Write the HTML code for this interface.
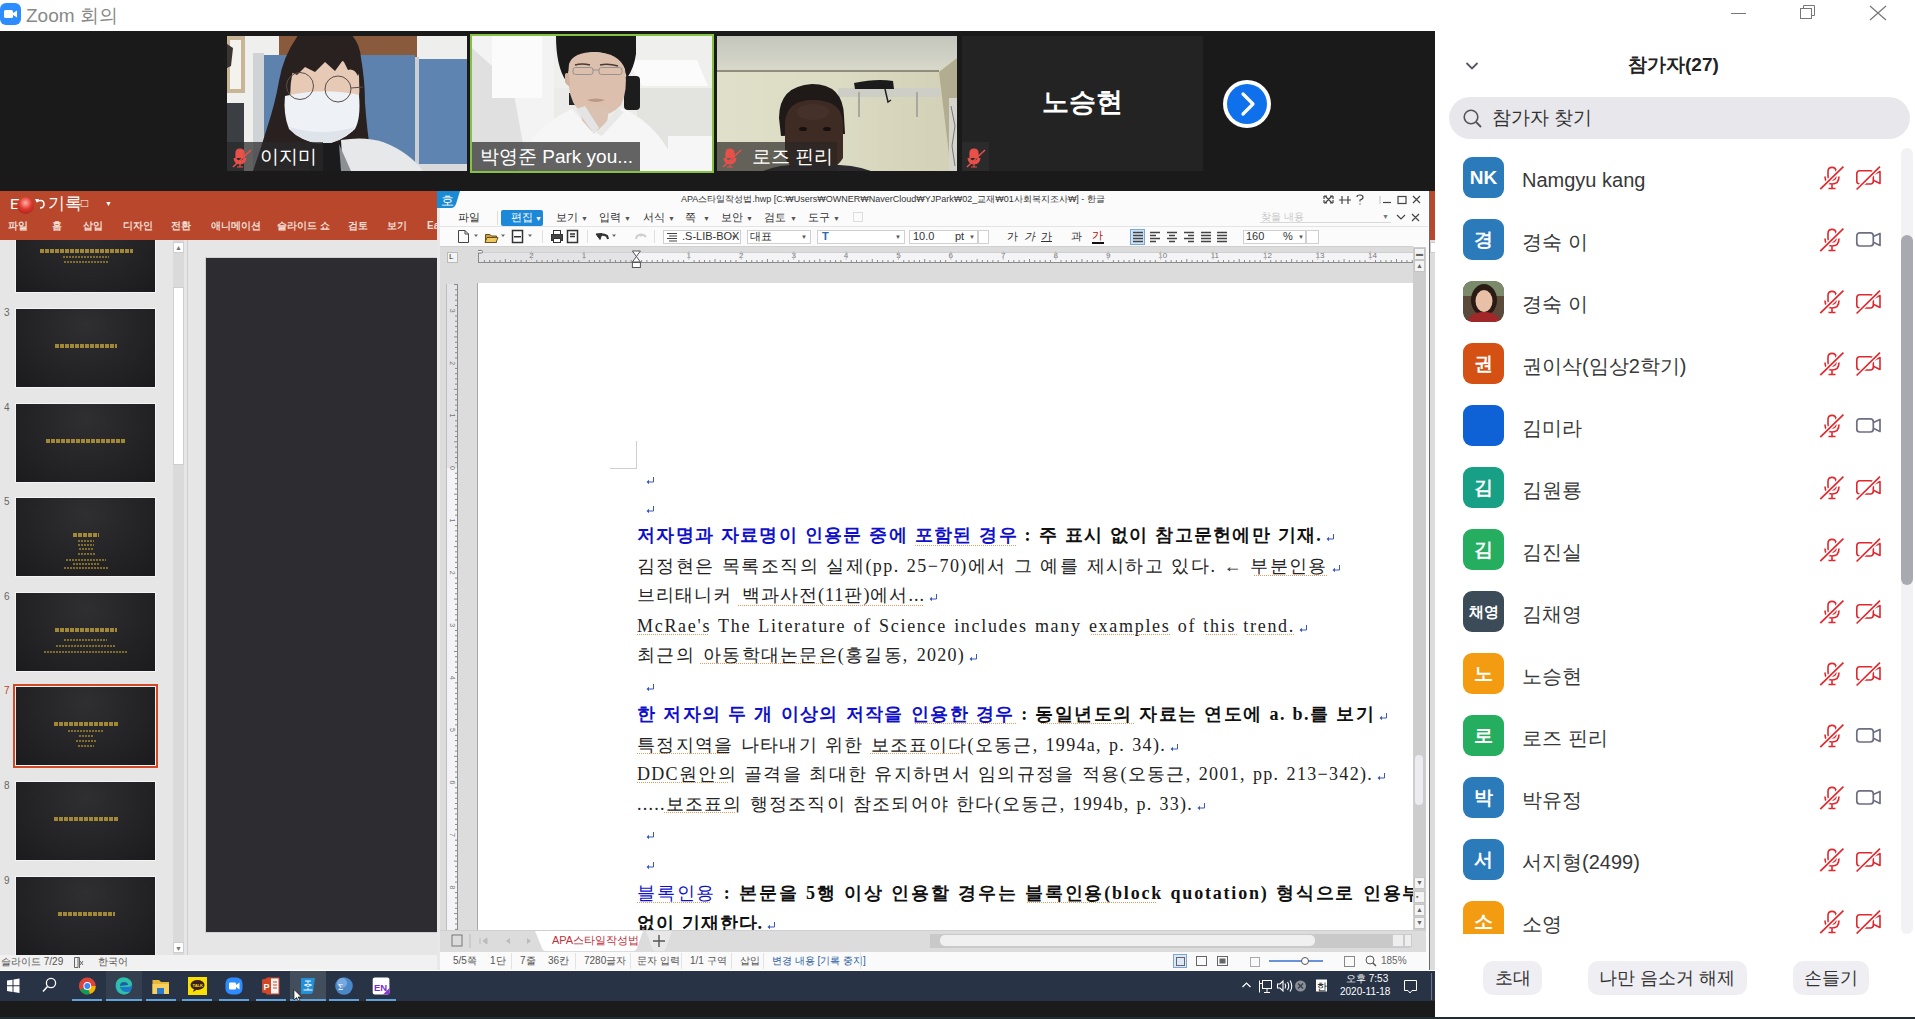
<!DOCTYPE html>
<html><head><meta charset="utf-8">
<style>
*{margin:0;padding:0;box-sizing:border-box}
html,body{width:1915px;height:1019px;overflow:hidden;background:#fff;font-family:"Liberation Sans",sans-serif;position:relative}
.a{position:absolute}
.t{position:absolute;white-space:nowrap;line-height:1}
/* title bar */
#title{left:0;top:0;width:1915px;height:31px;background:#fff}
/* video strip */
#strip{left:0;top:31px;width:1435px;height:160px;background:#1a1a1a}
.tile{position:absolute;overflow:hidden}
.lbl{position:absolute;left:0;bottom:0;height:29px;background:rgba(40,40,40,.72);color:#fff;font-size:19px;line-height:29px;white-space:nowrap}
/* ppt */
#ppt{left:0;top:191px;width:1435px;height:779px;background:#e6e6e6;overflow:hidden}
.thumb{position:absolute;left:16px;width:139px;height:78px;background:radial-gradient(ellipse at 50% 20%,#2f2f32 0,#242427 55%,#1b1b1d 100%);box-shadow:0 0 0 1px #f4f4f4}
.tn{position:absolute;left:4px;font-size:10px;color:#666}
.tt{position:absolute;left:0;width:139px;text-align:center;color:#d4a83a;font-size:6px;font-weight:bold;white-space:nowrap}
/* hwp */
#hwp{left:437px;top:191px;width:992px;height:779px;background:#f5f5f5;overflow:hidden;border-left:1px solid #aaa}
.doc{position:absolute;font-family:"Liberation Serif",serif;font-size:18px;color:#222;white-space:nowrap;line-height:20px;text-align:justify;text-align-last:justify}
.k{font-family:"Liberation Sans",sans-serif}
.rt{position:absolute;left:0;top:0}
.bl2{color:#1010c8}
.b{font-weight:bold;color:#111}
.bl{color:#1010c8;font-weight:bold}
.ret{color:#3355aa;font-size:10px}
/* taskbar */
#task{left:0;top:971px;width:1435px;height:30px;background:#283346}
#blk{left:0;top:1001px;width:1435px;height:16px;background:#1b1b1b}
#bot{left:0;top:1017px;width:1915px;height:2px;background:#1f2c30}
/* panel */
#panel{left:1435px;top:31px;width:480px;height:985px;background:#fff}
.row{position:absolute;left:28px;width:440px;height:41px}
.av{position:absolute;left:0;top:0;width:41px;height:41px;border-radius:9px;color:#fff;font-weight:bold;font-size:17px;text-align:center;line-height:41px}
.nm{position:absolute;left:59px;top:12px;font-size:20px;color:#383838;white-space:nowrap;line-height:22px}
.ic{position:absolute;top:8px}
.btn{position:absolute;top:930px;height:34px;background:#efeff3;border-radius:10px;font-size:18px;color:#333;text-align:center;line-height:34px}
</style></head><body>

<!-- TITLE BAR -->
<div id="title" class="a">
  <svg class="a" style="left:0;top:3px" width="21" height="22" viewBox="0 0 21 22"><rect x="0" y="0" width="21" height="22" rx="6" fill="#2d8cff"/><rect x="4" y="7" width="9" height="8" rx="1.5" fill="#fff"/><path d="M13 10 L17 7.5 V14.5 L13 12Z" fill="#fff"/></svg>
  <div class="t" style="left:26px;top:6px;font-size:19px;color:#888">Zoom 회의</div>
  <svg class="a" style="left:1725px;top:0" width="190" height="31"><line x1="6" y1="13.5" x2="21" y2="13.5" stroke="#777" stroke-width="1"/><rect x="75.5" y="8.5" width="11" height="10" fill="none" stroke="#777"/><path d="M78.5 8.5 V5.5 H89.5 V15.5 H86.5" fill="none" stroke="#777"/><path d="M145 6 L161 20 M161 6 L145 20" stroke="#777" stroke-width="1.2"/></svg>
</div>

<!-- VIDEO STRIP -->
<div id="strip" class="a"></div>
<!-- tile 1 -->
<div class="tile" style="left:227px;top:36px;width:240px;height:135px">
<svg width="240" height="135" viewBox="0 0 240 135">
<rect width="240" height="135" fill="#efefed"/>
<rect x="0" y="0" width="18" height="57" fill="#c8b596"/><rect x="3" y="4" width="11" height="49" fill="#f4f2ec"/>
<path d="M0 8 L6 12 L4 30 L0 32Z" fill="#3a3432"/>
<rect x="0" y="67" width="17" height="68" fill="#3b3e42"/>
<rect x="52" y="0" width="138" height="21" fill="#8a5a3c"/>
<rect x="190" y="0" width="50" height="23" fill="#eeeeec"/>
<rect x="26" y="17" width="11" height="118" fill="#d0d3d6"/>
<rect x="37" y="19" width="151" height="110" fill="#5d82ae"/>
<rect x="188" y="21" width="4" height="112" fill="#cbced2"/>
<rect x="192" y="23" width="48" height="106" fill="#5e85b2"/>
<rect x="37" y="128" width="203" height="7" fill="#d8d9db"/>
<path d="M72 -2 L124 -2 Q133 8 134 22 Q138 45 138 67 Q140 95 144 120 L148 135 L26 135 Q34 112 40 92 Q48 68 52 45 Q56 20 72 -2Z" fill="#292120"/>
<path d="M66 34 Q70 24 98 22 Q128 24 132 40 Q134 70 126 95 Q112 106 96 106 Q76 104 66 92 Q60 60 66 34Z" fill="#e7cab5"/>
<path d="M64 36 Q68 4 98 2 Q126 2 132 30 L131 40 Q127 32 121 34 L116 24 L108 35 L98 26 L88 36 L78 31 L70 39Z" fill="#292120"/>
<path d="M58 60 Q96 51 132 59 Q134 82 128 93 Q112 108 95 108 Q74 106 62 93 Q56 78 58 60Z" fill="#eef1f6"/>
<path d="M62 91 Q95 101 128 91 Q112 108 95 108 Q74 106 62 91Z" fill="#dfe3ea"/>
<circle cx="73" cy="50" r="13.5" fill="none" stroke="#5b4d4a" stroke-width="1"/><circle cx="111" cy="53" r="13" fill="none" stroke="#5b4d4a" stroke-width="1"/><path d="M124 52 L136 51" stroke="#5b4d4a" stroke-width="1"/>
<path d="M84 108 L96 107 L114 107 L118 135 L82 135Z" fill="#1b1b1d"/>
<path d="M114 104 Q138 100 156 106 Q182 116 196 135 L116 135Z" fill="#e7e8ea"/>
<path d="M112 108 L124 135 L114 135Z" fill="#8d9092"/>
</svg>
<div class="lbl" style="width:96px"><svg class="a" style="left:5px;top:6px" width="22" height="20" viewBox="0 0 22 20"><path d="M8 1 Q12 1 12 5 V10 Q12 13 8 13 Q4 13 4 10 V5 Q4 1 8 1Z M2 10 Q3 16 8 16 Q13 16 14 10 M8 16 V19 M5 19 H11" fill="#e8504a" stroke="#e8504a" stroke-width="1.2"/><line x1="1" y1="19" x2="19" y2="2" stroke="#e8504a" stroke-width="1.6"/></svg><span class="a" style="left:33px;top:0">이지미</span></div>
</div>
<!-- tile 2 -->
<div class="a" style="left:470px;top:34px;width:244px;height:139px;background:#84c341"></div>
<div class="tile" style="left:472px;top:36px;width:240px;height:135px">
<svg width="240" height="135" viewBox="0 0 240 135">
<rect width="240" height="135" fill="#ebebe9"/>
<rect x="0" y="0" width="82" height="135" fill="#f3f3f3"/>
<path d="M0 12 L40 48 L56 135 L0 135Z" fill="#e0e0e0"/>
<rect x="20" y="0" width="50" height="62" fill="#fbfbfb"/>
<rect x="82" y="0" width="158" height="52" fill="#efefed"/>
<path d="M155 24 L225 24 L236 50 L170 50Z" fill="#fbfbfb"/>
<rect x="165" y="52" width="75" height="83" fill="#e3e3df"/>
<rect x="196" y="100" width="44" height="35" fill="#f6f6f6"/>
<rect x="152" y="40" width="16" height="34" rx="4" fill="#1d1d1d"/>
<rect x="97" y="57" width="7" height="12" fill="#262626"/>
<path d="M84 0 H164 V18 Q162 32 155 42 L151 30 Q141 17 123 16 Q104 17 98 31 L94 45 Q84 30 84 0Z" fill="#1a1a1a"/>
<path d="M97 28 Q101 16 123 16 Q147 17 153 33 Q156 55 149 69 Q139 80 124 80 Q107 78 101 66 Q94 50 97 28Z" fill="#dcc0ad"/>
<path d="M93 38 Q95 36 97 38 L98 50 Q95 50 93 46Z" fill="#d0b29e"/>
<path d="M103 29 Q110 27 118 29 M128 29 Q136 27 146 30" stroke="#4a3a32" stroke-width="1.6" fill="none"/>
<rect x="101" y="31.5" width="20" height="7" rx="2.5" fill="none" stroke="#8c8c8c" stroke-width=".9"/>
<rect x="127" y="31.5" width="23" height="7" rx="2.5" fill="none" stroke="#8c8c8c" stroke-width=".9"/>
<path d="M121 34 H127" stroke="#8c8c8c" stroke-width=".9"/>
<path d="M115 64 Q124 61 133 64 Q124 68 115 64Z" fill="#b89888"/>
<path d="M108 72 L137 72 L134 95 L112 95Z" fill="#d9c2b2"/>
<path d="M46 135 Q52 95 100 73 L122 98 L150 72 Q190 90 206 135Z" fill="#f6f6f6"/>
<path d="M104 73 L122 98 L127 92 L113 70Z" fill="#e4e4e4"/><path d="M146 73 L124 97 L130 100 L152 76Z" fill="#e8e8e8"/>
</svg>
<div class="lbl" style="width:168px;background:rgba(62,62,62,.8)"><span class="a" style="left:8px;top:0">박영준 Park you...</span></div>
</div>
<!-- tile 3 -->
<div class="tile" style="left:717px;top:36px;width:240px;height:135px">
<svg width="240" height="135" viewBox="0 0 240 135">
<defs><linearGradient id="ceil" x1="0" y1="0" x2="0" y2="1"><stop offset="0" stop-color="#c4c6bd"/><stop offset="1" stop-color="#d8d8ca"/></linearGradient>
<linearGradient id="wall3" x1="0" y1="0" x2="1" y2="0"><stop offset="0" stop-color="#e0dfc9"/><stop offset=".5" stop-color="#dcdbc3"/><stop offset="1" stop-color="#d2d0b6"/></linearGradient></defs>
<rect width="240" height="135" fill="url(#wall3)"/>
<rect x="0" y="0" width="240" height="35" fill="url(#ceil)"/>
<rect x="0" y="34" width="222" height="2" fill="#8f8d7c"/>
<path d="M222 36 L240 22 L240 135 L234 135Z" fill="#b2ad90"/>
<rect x="232" y="62" width="8" height="73" fill="#d4d4cc"/><path d="M234 70 L238 90 L235 110 L238 130" stroke="#777" stroke-width="1" fill="none"/>
<rect x="121" y="52" width="102" height="9" fill="#cdcec6"/>
<path d="M137 47 Q160 42 176 45 L177 53 L138 53Z" fill="#1b1b1b"/><path d="M168 53 L171 66 L174 64" stroke="#222" stroke-width="1.5" fill="none"/>
<rect x="141" y="56" width="2" height="25" fill="#a8a89c"/><rect x="199" y="56" width="2" height="25" fill="#a8a89c"/>
<path d="M62 82 Q62 50 95 48 Q126 48 127 80 L128 98 L64 100Z" fill="#1f1918"/>
<path d="M68 86 Q70 64 96 64 Q124 64 126 86 L126 122 Q118 136 96 138 Q74 136 68 122Z" fill="#3d2b24"/>
<ellipse cx="96" cy="76" rx="16" ry="8" fill="#4b362d" opacity=".6"/>
<ellipse cx="86" cy="93" rx="4" ry="2" fill="#15100e"/><ellipse cx="110" cy="93" rx="4" ry="2" fill="#15100e"/>
<path d="M46 135 Q66 127 96 129 Q132 127 154 135Z" fill="#2c2a2f"/>
</svg>
<div class="lbl" style="width:120px;background:rgba(40,38,36,.68)"><svg class="a" style="left:5px;top:6px" width="22" height="20" viewBox="0 0 22 20"><path d="M8 1 Q12 1 12 5 V10 Q12 13 8 13 Q4 13 4 10 V5 Q4 1 8 1Z M2 10 Q3 16 8 16 Q13 16 14 10 M8 16 V19 M5 19 H11" fill="#e8504a" stroke="#e8504a" stroke-width="1.2"/><line x1="1" y1="19" x2="19" y2="2" stroke="#e8504a" stroke-width="1.6"/></svg><span class="a" style="left:35px;top:0">로즈 핀리</span></div>
</div>
<!-- tile 4 -->
<div class="tile" style="left:962px;top:36px;width:241px;height:135px;background:#232323">
<div class="t" style="left:0;width:241px;text-align:center;top:53px;font-size:27px;font-weight:bold;color:#fff">노승현</div>
<div class="lbl" style="width:27px;background:#2b2b2b"><svg class="a" style="left:4px;top:6px" width="22" height="20" viewBox="0 0 22 20"><path d="M8 1 Q12 1 12 5 V10 Q12 13 8 13 Q4 13 4 10 V5 Q4 1 8 1Z M2 10 Q3 16 8 16 Q13 16 14 10 M8 16 V19 M5 19 H11" fill="#e8504a" stroke="#e8504a" stroke-width="1.2"/><line x1="1" y1="19" x2="19" y2="2" stroke="#e8504a" stroke-width="1.6"/></svg></div>
</div>
<svg class="a" style="left:1222px;top:79px" width="50" height="50" viewBox="0 0 50 50"><circle cx="25" cy="25" r="24" fill="#fff"/><circle cx="25" cy="25" r="20" fill="#0e71eb"/><path d="M21 15 L31 25 L21 35" fill="none" stroke="#fff" stroke-width="3.2" stroke-linecap="round" stroke-linejoin="round"/></svg>


<!-- PPT + HWP -->
<div id="ppt" class="a"></div>
<div class="a" style="left:0;top:191px;width:1435px;height:49px;background:#b8472b"></div>
<div class="t" style="left:10px;top:196px;font-size:15px;color:#fff">E</div>
<div class="a" style="left:17px;top:197px;width:17px;height:17px;border-radius:50%;background:radial-gradient(circle at 50% 35%,#ffb0a8 0,#e0372c 45%,#8a1d18 100%)"></div>
<svg class="a" style="left:34px;top:198px" width="12" height="12" viewBox="0 0 12 12"><path d="M3 3 Q10 1 10 6 Q10 10 6 10" fill="none" stroke="#fff" stroke-width="1.5"/><path d="M1 1 L5 1 L3 5Z" fill="#fff"/></svg>
<div class="t" style="left:48px;top:195px;font-size:17px;color:#fff">기록</div>
<div class="t" style="left:81px;top:197px;font-size:12px;color:#fff">□</div>
<div class="t" style="left:105px;top:200px;font-size:7px;color:#fff">▼</div>
<div class="t" style="left:8px;top:221px;font-size:10px;font-weight:bold;color:#f3ddd4">파일</div>
<div class="t" style="left:52px;top:221px;font-size:10px;font-weight:bold;color:#f3ddd4">홈</div>
<div class="t" style="left:83px;top:221px;font-size:10px;font-weight:bold;color:#f3ddd4">삽입</div>
<div class="t" style="left:123px;top:221px;font-size:10px;font-weight:bold;color:#f3ddd4">디자인</div>
<div class="t" style="left:171px;top:221px;font-size:10px;font-weight:bold;color:#f3ddd4">전환</div>
<div class="t" style="left:211px;top:221px;font-size:10px;font-weight:bold;color:#f3ddd4">애니메이션</div>
<div class="t" style="left:277px;top:221px;font-size:10px;font-weight:bold;color:#f3ddd4">슬라이드 쇼</div>
<div class="t" style="left:348px;top:221px;font-size:10px;font-weight:bold;color:#f3ddd4">검토</div>
<div class="t" style="left:387px;top:221px;font-size:10px;font-weight:bold;color:#f3ddd4">보기</div>
<div class="t" style="left:427px;top:221px;font-size:10px;font-weight:bold;color:#f3ddd4">Ea</div>
<div class="a" style="left:0;top:240px;width:437px;height:715px;background:#e6e6e6;overflow:hidden">
<div class="thumb" style="top:-26px"><div class="a" style="left:24px;top:35px;width:93px;height:4px;background:repeating-linear-gradient(90deg,#c9a83a 0 4px,rgba(0,0,0,0) 4px 5px);opacity:.75"></div><div class="a" style="left:47px;top:42px;width:46px;height:2px;background:repeating-linear-gradient(90deg,#a88d30 0 2px,rgba(0,0,0,0) 2px 3px);opacity:.7"></div><div class="a" style="left:48px;top:47px;width:44px;height:2px;background:repeating-linear-gradient(90deg,#a88d30 0 2px,rgba(0,0,0,0) 2px 3px);opacity:.7"></div></div>
<div class="thumb" style="top:69px"><div class="a" style="left:39px;top:35px;width:62px;height:4px;background:repeating-linear-gradient(90deg,#c9a83a 0 4px,rgba(0,0,0,0) 4px 5px);opacity:.75"></div></div>
<div class="tn" style="top:67px;color:#666">3</div>
<div class="thumb" style="top:164px"><div class="a" style="left:30px;top:35px;width:79px;height:4px;background:repeating-linear-gradient(90deg,#c9a83a 0 4px,rgba(0,0,0,0) 4px 5px);opacity:.75"></div></div>
<div class="tn" style="top:162px;color:#666">4</div>
<div class="thumb" style="top:258px"><div class="a" style="left:57px;top:35px;width:26px;height:4px;background:repeating-linear-gradient(90deg,#c9a83a 0 4px,rgba(0,0,0,0) 4px 5px);opacity:.75"></div><div class="a" style="left:62px;top:42px;width:16px;height:2px;background:repeating-linear-gradient(90deg,#a88d30 0 2px,rgba(0,0,0,0) 2px 3px);opacity:.7"></div><div class="a" style="left:62px;top:46px;width:16px;height:2px;background:repeating-linear-gradient(90deg,#a88d30 0 2px,rgba(0,0,0,0) 2px 3px);opacity:.7"></div><div class="a" style="left:63px;top:50px;width:14px;height:2px;background:repeating-linear-gradient(90deg,#a88d30 0 2px,rgba(0,0,0,0) 2px 3px);opacity:.7"></div><div class="a" style="left:62px;top:55px;width:18px;height:2px;background:repeating-linear-gradient(90deg,#a88d30 0 2px,rgba(0,0,0,0) 2px 3px);opacity:.7"></div><div class="a" style="left:50px;top:61px;width:40px;height:2px;background:repeating-linear-gradient(90deg,#a88d30 0 2px,rgba(0,0,0,0) 2px 3px);opacity:.7"></div><div class="a" style="left:57px;top:65px;width:27px;height:2px;background:repeating-linear-gradient(90deg,#a88d30 0 2px,rgba(0,0,0,0) 2px 3px);opacity:.7"></div><div class="a" style="left:48px;top:69px;width:44px;height:2px;background:repeating-linear-gradient(90deg,#a88d30 0 2px,rgba(0,0,0,0) 2px 3px);opacity:.7"></div></div>
<div class="tn" style="top:256px;color:#666">5</div>
<div class="thumb" style="top:353px"><div class="a" style="left:39px;top:35px;width:62px;height:4px;background:repeating-linear-gradient(90deg,#c9a83a 0 4px,rgba(0,0,0,0) 4px 5px);opacity:.75"></div><div class="a" style="left:48px;top:46px;width:43px;height:2px;background:repeating-linear-gradient(90deg,#a88d30 0 2px,rgba(0,0,0,0) 2px 3px);opacity:.7"></div><div class="a" style="left:40px;top:52px;width:60px;height:2px;background:repeating-linear-gradient(90deg,#a88d30 0 2px,rgba(0,0,0,0) 2px 3px);opacity:.7"></div><div class="a" style="left:28px;top:58px;width:83px;height:2px;background:repeating-linear-gradient(90deg,#a88d30 0 2px,rgba(0,0,0,0) 2px 3px);opacity:.7"></div></div>
<div class="tn" style="top:351px;color:#666">6</div>
<div class="a" style="left:13px;top:444px;width:145px;height:84px;background:#d24726"></div>
<div class="thumb" style="top:447px"><div class="a" style="left:38px;top:35px;width:64px;height:4px;background:repeating-linear-gradient(90deg,#c9a83a 0 4px,rgba(0,0,0,0) 4px 5px);opacity:.75"></div><div class="a" style="left:52px;top:43px;width:36px;height:2px;background:repeating-linear-gradient(90deg,#a88d30 0 2px,rgba(0,0,0,0) 2px 3px);opacity:.7"></div><div class="a" style="left:63px;top:48px;width:14px;height:2px;background:repeating-linear-gradient(90deg,#a88d30 0 2px,rgba(0,0,0,0) 2px 3px);opacity:.7"></div><div class="a" style="left:60px;top:53px;width:20px;height:2px;background:repeating-linear-gradient(90deg,#a88d30 0 2px,rgba(0,0,0,0) 2px 3px);opacity:.7"></div><div class="a" style="left:62px;top:58px;width:16px;height:2px;background:repeating-linear-gradient(90deg,#a88d30 0 2px,rgba(0,0,0,0) 2px 3px);opacity:.7"></div></div>
<div class="tn" style="top:445px;color:#c43e1c">7</div>
<div class="thumb" style="top:542px"><div class="a" style="left:38px;top:35px;width:64px;height:4px;background:repeating-linear-gradient(90deg,#c9a83a 0 4px,rgba(0,0,0,0) 4px 5px);opacity:.75"></div></div>
<div class="tn" style="top:540px;color:#666">8</div>
<div class="thumb" style="top:637px"><div class="a" style="left:42px;top:35px;width:57px;height:4px;background:repeating-linear-gradient(90deg,#c9a83a 0 4px,rgba(0,0,0,0) 4px 5px);opacity:.75"></div></div>
<div class="tn" style="top:635px;color:#666">9</div>
<div class="a" style="left:173px;top:0;width:11px;height:715px;background:#dadada"></div>
<div class="a" style="left:173px;top:2px;width:11px;height:11px;background:#fff;border:1px solid #cfcfcf"></div>
<div class="t" style="left:175px;top:4px;font-size:7px;color:#777">▲</div>
<div class="a" style="left:173px;top:47px;width:11px;height:178px;background:#fff;border:1px solid #cfcfcf"></div>
<div class="a" style="left:173px;top:702px;width:11px;height:11px;background:#fff;border:1px solid #cfcfcf"></div>
<div class="t" style="left:175px;top:705px;font-size:7px;color:#777">▼</div>
<div class="a" style="left:187px;top:0;width:1px;height:715px;background:#cfcfcf"></div>
<div class="a" style="left:206px;top:18px;width:231px;height:674px;background:#2d2d31;box-shadow:0 0 0 1px #d0d0d0"></div>
</div>
<div class="a" style="left:0;top:955px;width:437px;height:15px;background:#f1f1f1"></div>
<div class="t" style="left:1px;top:957px;font-size:10px;color:#555">슬라이드 7/29</div>
<svg class="a" style="left:73px;top:956px" width="12" height="13" viewBox="0 0 12 13"><path d="M1.5 1.5 H5 V11.5 H1.5Z M5 1.5 H6.5 V12 M7 5 L10 9 M10 5 L7 9" fill="none" stroke="#666" stroke-width="1"/></svg>
<div class="t" style="left:98px;top:957px;font-size:10px;color:#555">한국어</div>
<div id="hwp" class="a"></div>
<div class="a" style="left:437px;top:191px;width:993px;height:779px;background:#fbfbfb;border-left:3px solid #e8e8e8;border-right:1px solid #6a6a6a"></div>
<div class="a" style="left:1430px;top:240px;width:5px;height:730px;background:#dcdcdc"></div><div class="a" style="left:1430px;top:242px;width:5px;height:11px;background:#fff;border:1px solid #ccc;border-right:none"></div>
<svg class="a" style="left:437px;top:191px" width="24" height="18" viewBox="0 0 24 18"><path d="M0 0 H23 L19 13 Q17.5 17 14 17 H0Z" fill="#1a8ad4"/><text x="4" y="14" font-size="13" fill="#fff" font-family="Liberation Sans">호</text></svg>
<div class="t" style="left:681px;top:195px;font-size:9px;color:#333">APA스타일작성법.hwp [C:₩Users₩OWNER₩NaverCloud₩YJPark₩02_교재₩01사회복지조사₩] - 한글</div>
<svg class="a" style="left:1320px;top:193px" width="105" height="15" viewBox="0 0 105 15"><g stroke="#444" stroke-width="1.2" fill="none"><path d="M5 3 L12 10 M12 3 L5 10 M4 3 H7 M4 3 V6 M13 3 H10 M13 3 V6 M4 10 H7 M4 10 V7 M13 10 H10 M13 10 V7"/><path d="M22 3 V11 M28 3 V11 M19 7 H31"/><path d="M37 4 Q37 2 40 2 Q43 2 43 4.5 Q43 6 40 7 V8.5 M40 10.5 V11.5"/><path d="M60 3 V11" stroke="#ccc"/><path d="M63 9.5 H71"/><rect x="78" y="3.5" width="8" height="7"/><path d="M93 3 L100 10 M100 3 L93 10"/></g></svg>
<div class="t" style="left:458px;top:212px;font-size:11px;color:#333">파일</div>
<div class="t" style="left:556px;top:212px;font-size:11px;color:#333">보기</div>
<div class="t" style="left:581px;top:215px;font-size:7px;color:#555">▼</div>
<div class="t" style="left:599px;top:212px;font-size:11px;color:#333">입력</div>
<div class="t" style="left:624px;top:215px;font-size:7px;color:#555">▼</div>
<div class="t" style="left:643px;top:212px;font-size:11px;color:#333">서식</div>
<div class="t" style="left:668px;top:215px;font-size:7px;color:#555">▼</div>
<div class="t" style="left:685px;top:212px;font-size:11px;color:#333">쪽</div>
<div class="t" style="left:703px;top:215px;font-size:7px;color:#555">▼</div>
<div class="t" style="left:721px;top:212px;font-size:11px;color:#333">보안</div>
<div class="t" style="left:746px;top:215px;font-size:7px;color:#555">▼</div>
<div class="t" style="left:764px;top:212px;font-size:11px;color:#333">검토</div>
<div class="t" style="left:790px;top:215px;font-size:7px;color:#555">▼</div>
<div class="t" style="left:808px;top:212px;font-size:11px;color:#333">도구</div>
<div class="t" style="left:833px;top:215px;font-size:7px;color:#555">▼</div>
<div class="a" style="left:497px;top:211px;width:1px;height:14px;background:#ddd"></div>
<div class="a" style="left:501px;top:210px;width:42px;height:16px;background:#1e88d8;border-radius:2px"></div>
<div class="t" style="left:511px;top:212px;font-size:11px;color:#fff">편집</div>
<div class="t" style="left:535px;top:215px;font-size:7px;color:#fff">▼</div>
<div class="a" style="left:853px;top:212px;width:10px;height:10px;border:1px solid #ddd"></div>
<div class="t" style="left:1261px;top:212px;font-size:10px;color:#c8c8c8">찾을 내용</div>
<div class="a" style="left:1260px;top:222px;width:131px;height:1px;background:#d8d8d8"></div>
<div class="t" style="left:1382px;top:213px;font-size:7px;color:#777">▼</div>
<svg class="a" style="left:1395px;top:212px" width="30" height="12" viewBox="0 0 30 12"><path d="M2 3 L6 7 L10 3 M17 2 L24 9 M24 2 L17 9" stroke="#444" stroke-width="1.2" fill="none"/></svg>
<div class="a" style="left:440px;top:226px;width:988px;height:1px;background:#e4e4e4"></div>
<svg class="a" style="left:440px;top:227px" width="900" height="19" viewBox="0 0 900 19">
<g fill="none" stroke="#444" stroke-width="1">
<path d="M18.5 3.5 H25 L28.5 7 V15.5 H18.5Z M25 3.5 V7 H28.5"/>
<path d="M45.5 7.5 H50 L51.5 9 H56.5 V15.5 H45.5Z" fill="#c8a040" stroke="#6a5020"/>
<path d="M47 10.5 H58 L56 15.5 H45Z" fill="#f0c860" stroke="#6a5020"/>
<rect x="72.5" y="3.5" width="10" height="12" fill="#fff" stroke="#333" stroke-width="1.5"/>
<rect x="74" y="9" width="7" height="1.5" fill="#333" stroke="none"/>
<rect x="111.5" y="7.5" width="11" height="6" fill="#444" stroke="#333"/><rect x="113.5" y="3.5" width="7" height="4" fill="#fff" stroke="#333"/><rect x="113.5" y="11.5" width="7" height="4" fill="#fff" stroke="#333"/>
<rect x="127.5" y="3.5" width="10" height="12" stroke="#333" stroke-width="1.5"/><path d="M130 7 H135 M130 9.5 H135" stroke="#333" stroke-width="1.5"/>
<path d="M158 10 Q161 6 167 9 L168 12" stroke="#333" stroke-width="2.2"/><path d="M156 7 L160 12.5 L162 6.5Z" fill="#333" stroke="#333"/>
<path d="M206 10 Q203 6 197 9 L196 12" stroke="#d0d0d0" stroke-width="2.2"/>
</g>
<g fill="#666"><path d="M34 7.5 h4 l-2 2.5z M61 7.5 h4 l-2 2.5z M88 7.5 h4 l-2 2.5z M172 7.5 h4 l-2 2.5z"/><path d="M199 7.5 h4 l-2 2.5z" fill="#ccc"/></g>
<path d="M102.5 3 V16 M147.5 3 V16 M214.5 3 V16" stroke="#e0e0e0"/>
</svg>
<div class="a" style="left:663px;top:230px;width:78px;height:14px;background:#fff;border:1px solid #d0d0d0"></div>
<div class="t" style="left:682px;top:231px;font-size:11px;color:#333">.S-LIB-BOX</div>
<div class="t" style="left:731px;top:234px;font-size:6px;color:#555">▼</div>
<div class="a" style="left:747px;top:230px;width:64px;height:14px;background:#fff;border:1px solid #d0d0d0"></div>
<div class="t" style="left:750px;top:231px;font-size:11px;color:#333">대표</div>
<div class="t" style="left:801px;top:234px;font-size:6px;color:#555">▼</div>
<div class="a" style="left:817px;top:230px;width:88px;height:14px;background:#fff;border:1px solid #d0d0d0"></div>
<div class="t" style="left:820px;top:231px;font-size:11px;color:#333"></div>
<div class="t" style="left:895px;top:234px;font-size:6px;color:#555">▼</div>
<div class="a" style="left:909px;top:230px;width:69px;height:14px;background:#fff;border:1px solid #d0d0d0"></div>
<div class="t" style="left:913px;top:231px;font-size:11px;color:#333">10.0</div>
<div class="t" style="left:969px;top:234px;font-size:6px;color:#555">▼</div>
<div class="a" style="left:1243px;top:230px;width:63px;height:14px;background:#fff;border:1px solid #d0d0d0"></div>
<div class="t" style="left:1246px;top:231px;font-size:11px;color:#333">160</div>
<div class="t" style="left:1298px;top:234px;font-size:6px;color:#555">▼</div>
<svg class="a" style="left:666px;top:232px" width="14" height="11"><path d="M1 1.5 H11 M3 4 H11 M1 6.5 H11 M3 9 H11" stroke="#444"/></svg>
<div class="t" style="left:822px;top:231px;font-size:11px;color:#2a6ab0;font-weight:bold">T</div>
<div class="t" style="left:955px;top:231px;font-size:11px;color:#333">pt</div>
<div class="t" style="left:1283px;top:231px;font-size:11px;color:#333">%</div>
<div class="a" style="left:978px;top:230px;width:11px;height:14px;border:1px solid #d0d0d0;background:#fff"></div>
<div class="a" style="left:1306px;top:230px;width:13px;height:14px;border:1px solid #d0d0d0;background:#fff"></div>
<div class="t" style="left:1007px;top:231px;font-size:11px;color:#333;">가</div>
<div class="t" style="left:1024px;top:231px;font-size:11px;color:#333;font-style:italic">가</div>
<div class="t" style="left:1041px;top:231px;font-size:11px;color:#333;text-decoration:underline">가</div>
<div class="t" style="left:1071px;top:231px;font-size:11px;color:#333;">과</div>
<div class="t" style="left:1092px;top:230px;font-size:11px;color:#b01010">가</div>
<div class="a" style="left:1092px;top:242px;width:12px;height:2px;background:#111"></div>
<div class="a" style="left:1130px;top:229px;width:15px;height:16px;background:#cfe3f7;border:1px solid #7aa7d8"></div>
<svg class="a" style="left:1131px;top:231px" width="96" height="12" viewBox="0 0 96 12"><g stroke="#444" stroke-width="1.4"><path d="M2 1.5 H12 M2 4.5 H12 M2 7.5 H12 M2 10.5 H12"/><path d="M19 1.5 H29 M19 4.5 H25 M19 7.5 H29 M19 10.5 H25"/><path d="M36 1.5 H46 M38 4.5 H44 M36 7.5 H46 M38 10.5 H44"/><path d="M53 1.5 H63 M57 4.5 H63 M53 7.5 H63 M57 10.5 H63"/><path d="M70 1.5 H80 M70 4.5 H80 M70 7.5 H80 M70 10.5 H80"/><path d="M86 1.5 H96 M86 4.5 H96 M86 7.5 H96 M86 10.5 H96"/></g></svg>
<div class="a" style="left:440px;top:246px;width:973px;height:1px;background:#d0d0d0"></div>
<div class="a" style="left:440px;top:247px;width:973px;height:683px;background:#dcdcdc"></div>

<svg class="a" style="left:478px;top:250px" width="935" height="20" viewBox="0 0 935 20"><rect x="0" y="2" width="158.4" height="10" fill="#e4e4e6"/><rect x="158.4" y="2" width="776.6" height="10" fill="#f4f4f6"/><path d="M0 2.5 H935" stroke="#cfcfcf" stroke-width="1"/><path d="M0.5 2 V12 M0 12.5 H935" stroke="#8a8a8a" stroke-width="1"/><path d="M6.38 8 V10 M11.62 8 V10 M16.87 8 V10 M22.11 8 V10 M27.35 7 V10 M32.59 8 V10 M37.83 8 V10 M43.08 8 V10 M48.32 8 V10 M58.80 8 V10 M64.04 8 V10 M69.29 8 V10 M74.53 8 V10 M79.77 7 V10 M85.01 8 V10 M90.25 8 V10 M95.50 8 V10 M100.74 8 V10 M111.22 8 V10 M116.46 8 V10 M121.71 8 V10 M126.95 8 V10 M132.19 7 V10 M137.43 8 V10 M142.67 8 V10 M147.92 8 V10 M153.16 8 V10 M163.64 8 V10 M168.88 8 V10 M174.13 8 V10 M179.37 8 V10 M184.61 7 V10 M189.85 8 V10 M195.09 8 V10 M200.34 8 V10 M205.58 8 V10 M216.06 8 V10 M221.30 8 V10 M226.55 8 V10 M231.79 8 V10 M237.03 7 V10 M242.27 8 V10 M247.51 8 V10 M252.76 8 V10 M258.00 8 V10 M268.48 8 V10 M273.72 8 V10 M278.97 8 V10 M284.21 8 V10 M289.45 7 V10 M294.69 8 V10 M299.93 8 V10 M305.18 8 V10 M310.42 8 V10 M320.90 8 V10 M326.14 8 V10 M331.39 8 V10 M336.63 8 V10 M341.87 7 V10 M347.11 8 V10 M352.35 8 V10 M357.60 8 V10 M362.84 8 V10 M373.32 8 V10 M378.56 8 V10 M383.81 8 V10 M389.05 8 V10 M394.29 7 V10 M399.53 8 V10 M404.77 8 V10 M410.02 8 V10 M415.26 8 V10 M425.74 8 V10 M430.98 8 V10 M436.23 8 V10 M441.47 8 V10 M446.71 7 V10 M451.95 8 V10 M457.19 8 V10 M462.44 8 V10 M467.68 8 V10 M478.16 8 V10 M483.40 8 V10 M488.65 8 V10 M493.89 8 V10 M499.13 7 V10 M504.37 8 V10 M509.61 8 V10 M514.86 8 V10 M520.10 8 V10 M530.58 8 V10 M535.82 8 V10 M541.07 8 V10 M546.31 8 V10 M551.55 7 V10 M556.79 8 V10 M562.03 8 V10 M567.28 8 V10 M572.52 8 V10 M583.00 8 V10 M588.24 8 V10 M593.49 8 V10 M598.73 8 V10 M603.97 7 V10 M609.21 8 V10 M614.45 8 V10 M619.70 8 V10 M624.94 8 V10 M635.42 8 V10 M640.66 8 V10 M645.91 8 V10 M651.15 8 V10 M656.39 7 V10 M661.63 8 V10 M666.87 8 V10 M672.12 8 V10 M677.36 8 V10 M687.84 8 V10 M693.08 8 V10 M698.33 8 V10 M703.57 8 V10 M708.81 7 V10 M714.05 8 V10 M719.29 8 V10 M724.54 8 V10 M729.78 8 V10 M740.26 8 V10 M745.50 8 V10 M750.75 8 V10 M755.99 8 V10 M761.23 7 V10 M766.47 8 V10 M771.71 8 V10 M776.96 8 V10 M782.20 8 V10 M792.68 8 V10 M797.92 8 V10 M803.17 8 V10 M808.41 8 V10 M813.65 7 V10 M818.89 8 V10 M824.13 8 V10 M829.38 8 V10 M834.62 8 V10 M845.10 8 V10 M850.34 8 V10 M855.59 8 V10 M860.83 8 V10 M866.07 7 V10 M871.31 8 V10 M876.55 8 V10 M881.80 8 V10 M887.04 8 V10 M897.52 8 V10 M902.76 8 V10 M908.01 8 V10 M913.25 8 V10 M918.49 7 V10 M923.73 8 V10 M928.97 8 V10 M934.22 8 V10 " stroke="#8a8a8a" stroke-width="1" transform="translate(0,2)"/><text x="51.3" y="8" font-size="8" fill="#777" font-family="Liberation Sans">2</text><path d="M53.56 1 V10" stroke="#bbb" stroke-width=".8"/><text x="103.7" y="8" font-size="8" fill="#777" font-family="Liberation Sans">1</text><path d="M105.98 1 V10" stroke="#bbb" stroke-width=".8"/><text x="208.5" y="8" font-size="8" fill="#777" font-family="Liberation Sans">1</text><path d="M210.82 1 V10" stroke="#bbb" stroke-width=".8"/><text x="260.9" y="8" font-size="8" fill="#777" font-family="Liberation Sans">2</text><path d="M263.24 1 V10" stroke="#bbb" stroke-width=".8"/><text x="313.4" y="8" font-size="8" fill="#777" font-family="Liberation Sans">3</text><path d="M315.66 1 V10" stroke="#bbb" stroke-width=".8"/><text x="365.8" y="8" font-size="8" fill="#777" font-family="Liberation Sans">4</text><path d="M368.08 1 V10" stroke="#bbb" stroke-width=".8"/><text x="418.2" y="8" font-size="8" fill="#777" font-family="Liberation Sans">5</text><path d="M420.50 1 V10" stroke="#bbb" stroke-width=".8"/><text x="470.6" y="8" font-size="8" fill="#777" font-family="Liberation Sans">6</text><path d="M472.92 1 V10" stroke="#bbb" stroke-width=".8"/><text x="523.0" y="8" font-size="8" fill="#777" font-family="Liberation Sans">7</text><path d="M525.34 1 V10" stroke="#bbb" stroke-width=".8"/><text x="575.5" y="8" font-size="8" fill="#777" font-family="Liberation Sans">8</text><path d="M577.76 1 V10" stroke="#bbb" stroke-width=".8"/><text x="627.9" y="8" font-size="8" fill="#777" font-family="Liberation Sans">9</text><path d="M630.18 1 V10" stroke="#bbb" stroke-width=".8"/><text x="680.3" y="8" font-size="8" fill="#777" font-family="Liberation Sans">10</text><path d="M682.60 1 V10" stroke="#bbb" stroke-width=".8"/><text x="732.7" y="8" font-size="8" fill="#777" font-family="Liberation Sans">11</text><path d="M735.02 1 V10" stroke="#bbb" stroke-width=".8"/><text x="785.1" y="8" font-size="8" fill="#777" font-family="Liberation Sans">12</text><path d="M787.44 1 V10" stroke="#bbb" stroke-width=".8"/><text x="837.6" y="8" font-size="8" fill="#777" font-family="Liberation Sans">13</text><path d="M839.86 1 V10" stroke="#bbb" stroke-width=".8"/><text x="890.0" y="8" font-size="8" fill="#777" font-family="Liberation Sans">14</text><path d="M892.28 1 V10" stroke="#bbb" stroke-width=".8"/><rect x="-2.5" y="0.5" width="7" height="2.5" rx="1" fill="#f4f4f4" stroke="#777"/><path d="M154.4 1 H162.4 L158.4 6.5 L162.4 12 H154.4 L158.4 6.5Z" fill="#fff" stroke="#555"/><rect x="154.4" y="12.5" width="8" height="5" fill="#fff" stroke="#555"/></svg>
<div class="a" style="left:447px;top:252px;width:11px;height:11px;border:1px solid #bbb;background:#f4f4f4"></div>
<div class="t" style="left:449px;top:253px;font-size:8px;color:#333">L</div>
<svg class="a" style="left:446px;top:284px" width="12" height="646" viewBox="0 0 12 646"><rect x="0" y="0" width="11" height="184" fill="#e4e4e6"/><rect x="0" y="184" width="11" height="462" fill="#f4f4f6"/><path d="M0.5 0 V646" stroke="#bdbdbd"/><path d="M11.5 0 V646" stroke="#8a8a8a"/><path d="M8 0.53 H11 M9 5.77 H11 M9 11.01 H11 M9 16.26 H11 M9 21.50 H11 M9 31.98 H11 M9 37.22 H11 M9 42.47 H11 M9 47.71 H11 M8 52.95 H11 M9 58.19 H11 M9 63.43 H11 M9 68.68 H11 M9 73.92 H11 M9 84.40 H11 M9 89.64 H11 M9 94.89 H11 M9 100.13 H11 M8 105.37 H11 M9 110.61 H11 M9 115.85 H11 M9 121.10 H11 M9 126.34 H11 M9 136.82 H11 M9 142.06 H11 M9 147.31 H11 M9 152.55 H11 M8 157.79 H11 M9 163.03 H11 M9 168.27 H11 M9 173.52 H11 M9 178.76 H11 M9 189.24 H11 M9 194.48 H11 M9 199.73 H11 M9 204.97 H11 M8 210.21 H11 M9 215.45 H11 M9 220.69 H11 M9 225.94 H11 M9 231.18 H11 M9 241.66 H11 M9 246.90 H11 M9 252.15 H11 M9 257.39 H11 M8 262.63 H11 M9 267.87 H11 M9 273.11 H11 M9 278.36 H11 M9 283.60 H11 M9 294.08 H11 M9 299.32 H11 M9 304.57 H11 M9 309.81 H11 M8 315.05 H11 M9 320.29 H11 M9 325.53 H11 M9 330.78 H11 M9 336.02 H11 M9 346.50 H11 M9 351.74 H11 M9 356.99 H11 M9 362.23 H11 M8 367.47 H11 M9 372.71 H11 M9 377.95 H11 M9 383.20 H11 M9 388.44 H11 M9 398.92 H11 M9 404.16 H11 M9 409.41 H11 M9 414.65 H11 M8 419.89 H11 M9 425.13 H11 M9 430.37 H11 M9 435.62 H11 M9 440.86 H11 M9 451.34 H11 M9 456.58 H11 M9 461.83 H11 M9 467.07 H11 M8 472.31 H11 M9 477.55 H11 M9 482.79 H11 M9 488.04 H11 M9 493.28 H11 M9 503.76 H11 M9 509.00 H11 M9 514.25 H11 M9 519.49 H11 M8 524.73 H11 M9 529.97 H11 M9 535.21 H11 M9 540.46 H11 M9 545.70 H11 M9 556.18 H11 M9 561.42 H11 M9 566.67 H11 M9 571.91 H11 M8 577.15 H11 M9 582.39 H11 M9 587.63 H11 M9 592.88 H11 M9 598.12 H11 M9 608.60 H11 M9 613.84 H11 M9 619.09 H11 M9 624.33 H11 M8 629.57 H11 M9 634.81 H11 M9 640.05 H11 M9 645.30 H11 " stroke="#8a8a8a"/><text x="0" y="0" font-size="7" fill="#777" font-family="Liberation Sans" transform="translate(3.5,24.7) rotate(90)">3</text><text x="0" y="0" font-size="7" fill="#777" font-family="Liberation Sans" transform="translate(3.5,77.2) rotate(90)">2</text><text x="0" y="0" font-size="7" fill="#777" font-family="Liberation Sans" transform="translate(3.5,129.6) rotate(90)">1</text><text x="0" y="0" font-size="7" fill="#777" font-family="Liberation Sans" transform="translate(3.5,182.0) rotate(90)">0</text><text x="0" y="0" font-size="7" fill="#777" font-family="Liberation Sans" transform="translate(3.5,234.4) rotate(90)">1</text><text x="0" y="0" font-size="7" fill="#777" font-family="Liberation Sans" transform="translate(3.5,286.8) rotate(90)">2</text><text x="0" y="0" font-size="7" fill="#777" font-family="Liberation Sans" transform="translate(3.5,339.3) rotate(90)">3</text><text x="0" y="0" font-size="7" fill="#777" font-family="Liberation Sans" transform="translate(3.5,391.7) rotate(90)">4</text><text x="0" y="0" font-size="7" fill="#777" font-family="Liberation Sans" transform="translate(3.5,444.1) rotate(90)">5</text><text x="0" y="0" font-size="7" fill="#777" font-family="Liberation Sans" transform="translate(3.5,496.5) rotate(90)">6</text><text x="0" y="0" font-size="7" fill="#777" font-family="Liberation Sans" transform="translate(3.5,548.9) rotate(90)">7</text><text x="0" y="0" font-size="7" fill="#777" font-family="Liberation Sans" transform="translate(3.5,601.4) rotate(90)">8</text></svg>
<div class="a" style="left:477px;top:283px;width:1px;height:647px;background:#a8a8a8"></div>
<div class="a" style="left:478px;top:283px;width:935px;height:647px;background:#fff;overflow:hidden" id="page">
<div class="a" style="left:158px;top:158px;width:1px;height:27px;background:#cfcfcf"></div><div class="a" style="left:132px;top:185px;width:27px;height:1px;background:#cfcfcf"></div>
<!--DOC-->
<div class="doc" id="dl0" style="left:159px;top:242.3px;width:685px;letter-spacing:1.29px"><span class="bl"><span class="k">저자명과</span> <span class="k">자료명이</span> <span class="k">인용문</span> <span class="k">중에</span> <span class="k">포함된</span> <span class="k">경우</span></span><span class="b"> : <span class="k">주</span> <span class="k">표시</span> <span class="k">없이</span> <span class="k">참고문헌에만</span> <span class="k">기재</span>.</span></div>
<div class="a" style="left:848px;top:250.3px"><svg class="rt" width="9" height="9" viewBox="0 0 9 9"><path d="M7.5 1 V6 H2" fill="none" stroke="#3a56b8" stroke-width="1"/><path d="M0.5 6 L3 3.8 V8.2Z" fill="#3a56b8"/></svg></div>
<div class="doc" id="dl1" style="left:159px;top:272.8px;width:691px;letter-spacing:1.47px"><span class="k">김정현은</span> <span class="k">목록조직의</span> <span class="k">실제</span>(pp. 25−70)<span class="k">에서</span> <span class="k">그</span> <span class="k">예를</span> <span class="k">제시하고</span> <span class="k">있다</span>. ← <span class="k">부분인용</span></div>
<div class="a" style="left:854px;top:280.8px"><svg class="rt" width="9" height="9" viewBox="0 0 9 9"><path d="M7.5 1 V6 H2" fill="none" stroke="#3a56b8" stroke-width="1"/><path d="M0.5 6 L3 3.8 V8.2Z" fill="#3a56b8"/></svg></div>
<div class="doc" id="dl2" style="left:159px;top:302.4px;width:288px;letter-spacing:1.02px"><span class="k">브리태니커</span> <span class="k">백과사전</span>(11<span class="k">판</span>)<span class="k">에서</span>...</div>
<div class="a" style="left:451px;top:310.4px"><svg class="rt" width="9" height="9" viewBox="0 0 9 9"><path d="M7.5 1 V6 H2" fill="none" stroke="#3a56b8" stroke-width="1"/><path d="M0.5 6 L3 3.8 V8.2Z" fill="#3a56b8"/></svg></div>
<div class="doc" id="dl3" style="left:159px;top:332.8px;width:658px;letter-spacing:1.70px">McRae's The Literature of Science includes many examples of this trend.</div>
<div class="a" style="left:821px;top:340.8px"><svg class="rt" width="9" height="9" viewBox="0 0 9 9"><path d="M7.5 1 V6 H2" fill="none" stroke="#3a56b8" stroke-width="1"/><path d="M0.5 6 L3 3.8 V8.2Z" fill="#3a56b8"/></svg></div>
<div class="doc" id="dl4" style="left:159px;top:361.6px;width:328px;letter-spacing:1.25px"><span class="k">최근의</span> <span class="k">아동학대논문은</span>(<span class="k">홍길동</span>, 2020)</div>
<div class="a" style="left:491px;top:369.6px"><svg class="rt" width="9" height="9" viewBox="0 0 9 9"><path d="M7.5 1 V6 H2" fill="none" stroke="#3a56b8" stroke-width="1"/><path d="M0.5 6 L3 3.8 V8.2Z" fill="#3a56b8"/></svg></div>
<div class="doc" id="dl5" style="left:159px;top:420.8px;width:738px;letter-spacing:1.44px"><span class="bl"><span class="k">한</span> <span class="k">저자의</span> <span class="k">두</span> <span class="k">개</span> <span class="k">이상의</span> <span class="k">저작을</span> <span class="k">인용한</span> <span class="k">경우</span></span><span class="b"> : <span class="k">동일년도의</span> <span class="k">자료는</span> <span class="k">연도에</span> a. b.<span class="k">를</span> <span class="k">보기</span></span></div>
<div class="a" style="left:901px;top:428.8px"><svg class="rt" width="9" height="9" viewBox="0 0 9 9"><path d="M7.5 1 V6 H2" fill="none" stroke="#3a56b8" stroke-width="1"/><path d="M0.5 6 L3 3.8 V8.2Z" fill="#3a56b8"/></svg></div>
<div class="doc" id="dl6" style="left:159px;top:451.7px;width:529px;letter-spacing:1.31px"><span class="k">특정지역을</span> <span class="k">나타내기</span> <span class="k">위한</span> <span class="k">보조표이다</span>(<span class="k">오동근</span>, 1994a, p. 34).</div>
<div class="a" style="left:692px;top:459.7px"><svg class="rt" width="9" height="9" viewBox="0 0 9 9"><path d="M7.5 1 V6 H2" fill="none" stroke="#3a56b8" stroke-width="1"/><path d="M0.5 6 L3 3.8 V8.2Z" fill="#3a56b8"/></svg></div>
<div class="doc" id="dl7" style="left:159px;top:480.9px;width:736px;letter-spacing:1.31px">DDC<span class="k">원안의</span> <span class="k">골격을</span> <span class="k">최대한</span> <span class="k">유지하면서</span> <span class="k">임의규정을</span> <span class="k">적용</span>(<span class="k">오동근</span>, 2001, pp. 213−342).</div>
<div class="a" style="left:899px;top:488.9px"><svg class="rt" width="9" height="9" viewBox="0 0 9 9"><path d="M7.5 1 V6 H2" fill="none" stroke="#3a56b8" stroke-width="1"/><path d="M0.5 6 L3 3.8 V8.2Z" fill="#3a56b8"/></svg></div>
<div class="doc" id="dl8" style="left:159px;top:510.9px;width:556px;letter-spacing:1.23px">.....<span class="k">보조표의</span> <span class="k">행정조직이</span> <span class="k">참조되어야</span> <span class="k">한다</span>(<span class="k">오동근</span>, 1994b, p. 33).</div>
<div class="a" style="left:719px;top:518.9px"><svg class="rt" width="9" height="9" viewBox="0 0 9 9"><path d="M7.5 1 V6 H2" fill="none" stroke="#3a56b8" stroke-width="1"/><path d="M0.5 6 L3 3.8 V8.2Z" fill="#3a56b8"/></svg></div>
<div class="doc" id="dl9" style="left:159px;top:599.8px;width:805px;letter-spacing:1.80px"><span class="bl2"><span class="k">블록인용</span></span><span class="b"> : <span class="k">본문을</span> 5<span class="k">행</span> <span class="k">이상</span> <span class="k">인용할</span> <span class="k">경우는</span> <span class="k">블록인용</span>(block quotation) <span class="k">형식으로</span> <span class="k">인용부호</span></span></div>
<div class="doc" id="dl10" style="left:159px;top:629.5px;width:126px;letter-spacing:0.89px"><span class="b"><span class="k">없이</span> <span class="k">기재한다</span>.</span></div>
<div class="a" style="left:289px;top:637.5px"><svg class="rt" width="9" height="9" viewBox="0 0 9 9"><path d="M7.5 1 V6 H2" fill="none" stroke="#3a56b8" stroke-width="1"/><path d="M0.5 6 L3 3.8 V8.2Z" fill="#3a56b8"/></svg></div>
<div class="a" style="left:168px;top:193px"><svg class="rt" width="9" height="9" viewBox="0 0 9 9"><path d="M7.5 1 V6 H2" fill="none" stroke="#3a56b8" stroke-width="1"/><path d="M0.5 6 L3 3.8 V8.2Z" fill="#3a56b8"/></svg></div>
<div class="a" style="left:168px;top:222px"><svg class="rt" width="9" height="9" viewBox="0 0 9 9"><path d="M7.5 1 V6 H2" fill="none" stroke="#3a56b8" stroke-width="1"/><path d="M0.5 6 L3 3.8 V8.2Z" fill="#3a56b8"/></svg></div>
<div class="a" style="left:168px;top:400px"><svg class="rt" width="9" height="9" viewBox="0 0 9 9"><path d="M7.5 1 V6 H2" fill="none" stroke="#3a56b8" stroke-width="1"/><path d="M0.5 6 L3 3.8 V8.2Z" fill="#3a56b8"/></svg></div>
<div class="a" style="left:168px;top:548px"><svg class="rt" width="9" height="9" viewBox="0 0 9 9"><path d="M7.5 1 V6 H2" fill="none" stroke="#3a56b8" stroke-width="1"/><path d="M0.5 6 L3 3.8 V8.2Z" fill="#3a56b8"/></svg></div>
<div class="a" style="left:168px;top:578px"><svg class="rt" width="9" height="9" viewBox="0 0 9 9"><path d="M7.5 1 V6 H2" fill="none" stroke="#3a56b8" stroke-width="1"/><path d="M0.5 6 L3 3.8 V8.2Z" fill="#3a56b8"/></svg></div>
<div class="a" style="left:437px;top:262px;width:102px;height:1px;background:repeating-linear-gradient(90deg,#e49a5a 0 1px,rgba(0,0,0,0) 1px 2px)"></div><div class="a" style="left:776px;top:292px;width:74px;height:1px;background:repeating-linear-gradient(90deg,#e49a5a 0 1px,rgba(0,0,0,0) 1px 2px)"></div><div class="a" style="left:260px;top:322px;width:186px;height:1px;background:repeating-linear-gradient(90deg,#e49a5a 0 1px,rgba(0,0,0,0) 1px 2px)"></div><div class="a" style="left:159px;top:351px;width:71px;height:1px;background:repeating-linear-gradient(90deg,#e49a5a 0 1px,rgba(0,0,0,0) 1px 2px)"></div><div class="a" style="left:613px;top:351px;width:79px;height:1px;background:repeating-linear-gradient(90deg,#e49a5a 0 1px,rgba(0,0,0,0) 1px 2px)"></div><div class="a" style="left:728px;top:351px;width:31px;height:1px;background:repeating-linear-gradient(90deg,#e49a5a 0 1px,rgba(0,0,0,0) 1px 2px)"></div><div class="a" style="left:769px;top:351px;width:47px;height:1px;background:repeating-linear-gradient(90deg,#e49a5a 0 1px,rgba(0,0,0,0) 1px 2px)"></div><div class="a" style="left:222px;top:380px;width:130px;height:1px;background:repeating-linear-gradient(90deg,#e49a5a 0 1px,rgba(0,0,0,0) 1px 2px)"></div><div class="a" style="left:437px;top:440px;width:102px;height:1px;background:repeating-linear-gradient(90deg,#e49a5a 0 1px,rgba(0,0,0,0) 1px 2px)"></div><div class="a" style="left:563px;top:440px;width:93px;height:1px;background:repeating-linear-gradient(90deg,#e49a5a 0 1px,rgba(0,0,0,0) 1px 2px)"></div><div class="a" style="left:159px;top:470px;width:91px;height:1px;background:repeating-linear-gradient(90deg,#e49a5a 0 1px,rgba(0,0,0,0) 1px 2px)"></div><div class="a" style="left:392px;top:470px;width:90px;height:1px;background:repeating-linear-gradient(90deg,#e49a5a 0 1px,rgba(0,0,0,0) 1px 2px)"></div><div class="a" style="left:159px;top:499px;width:92px;height:1px;background:repeating-linear-gradient(90deg,#e49a5a 0 1px,rgba(0,0,0,0) 1px 2px)"></div><div class="a" style="left:186px;top:529px;width:72px;height:1px;background:repeating-linear-gradient(90deg,#e49a5a 0 1px,rgba(0,0,0,0) 1px 2px)"></div><div class="a" style="left:159px;top:619px;width:74px;height:1px;background:repeating-linear-gradient(90deg,#e49a5a 0 1px,rgba(0,0,0,0) 1px 2px)"></div><div class="a" style="left:549px;top:619px;width:129px;height:1px;background:repeating-linear-gradient(90deg,#e49a5a 0 1px,rgba(0,0,0,0) 1px 2px)"></div>
<!--/DOC-->
</div>
<div class="a" style="left:1413px;top:247px;width:13px;height:683px;background:#cdcdcd"></div>
<div class="a" style="left:1414px;top:248px;width:11px;height:12px;background:#f4f4f4;border:1px solid #c4c4c4"></div>
<div class="t" style="left:1416px;top:250px;font-size:7px;color:#666">▬</div>
<div class="a" style="left:1414px;top:260px;width:11px;height:12px;background:#f4f4f4;border:1px solid #c4c4c4"></div>
<div class="t" style="left:1416px;top:262px;font-size:7px;color:#666">▲</div>
<div class="a" style="left:1414px;top:877px;width:11px;height:12px;background:#f4f4f4;border:1px solid #c4c4c4"></div>
<div class="t" style="left:1416px;top:879px;font-size:7px;color:#666">▼</div>
<div class="a" style="left:1414px;top:891px;width:11px;height:12px;background:#f4f4f4;border:1px solid #c4c4c4"></div>
<div class="t" style="left:1416px;top:893px;font-size:7px;color:#666">▪</div>
<div class="a" style="left:1414px;top:904px;width:11px;height:12px;background:#f4f4f4;border:1px solid #c4c4c4"></div>
<div class="t" style="left:1416px;top:906px;font-size:7px;color:#666">▲</div>
<div class="a" style="left:1414px;top:917px;width:11px;height:12px;background:#f4f4f4;border:1px solid #c4c4c4"></div>
<div class="t" style="left:1416px;top:919px;font-size:7px;color:#666">▼</div>
<div class="a" style="left:1415px;top:755px;width:8px;height:50px;border-radius:4px;background:#ececf0"></div>
<div class="a" style="left:440px;top:930px;width:986px;height:22px;background:#dcdcdc;border-top:1px solid #cfcfcf"></div>
<svg class="a" style="left:440px;top:930px" width="500" height="22" viewBox="0 0 500 22"><rect x="12" y="5" width="10" height="11" fill="none" stroke="#777"/><path d="M30 4 V18" stroke="#bbb"/><g fill="#bbb"><path d="M40 8 V14 M43 11 L47 8 V14Z" stroke="#bbb"/><path d="M70 8 L66 11 L70 14Z M87 8 L91 11 L87 14Z M112 8 L116 11 L112 14Z"/></g><path d="M95 1 L102 18 Q103 21 106 21 H193 Q196 21 197 18 L203 1Z" fill="#fff"/><path d="M206 1 L212 18 Q213 21 216 21 H222 Q225 21 226 18 L232 1Z" fill="#e8e8e8"/><path d="M213 11 H225 M219 5 V17" stroke="#555" stroke-width="1.4"/></svg>
<div class="t" style="left:552px;top:935px;font-size:11px;color:#c0303a">APA스타일작성법</div>
<div class="a" style="left:930px;top:934px;width:480px;height:14px;background:#c9c9c9"></div>
<div class="a" style="left:940px;top:935px;width:375px;height:11px;border-radius:5px;background:#f0f0f0"></div>
<div class="a" style="left:1392px;top:934px;width:12px;height:13px;background:#eee;border:1px solid #ccc"></div><div class="a" style="left:1404px;top:934px;width:8px;height:13px;background:#eee;border:1px solid #ccc"></div>
<div class="a" style="left:440px;top:952px;width:986px;height:18px;background:#fafafa"></div>
<div class="t" style="left:453px;top:956px;font-size:10px;color:#555">5/5쪽</div>
<div class="t" style="left:490px;top:956px;font-size:10px;color:#555">1단</div>
<div class="t" style="left:520px;top:956px;font-size:10px;color:#555">7줄</div>
<div class="t" style="left:548px;top:956px;font-size:10px;color:#555">36칸</div>
<div class="t" style="left:584px;top:956px;font-size:10px;color:#555">7280글자</div>
<div class="t" style="left:637px;top:956px;font-size:10px;color:#555">문자 입력</div>
<div class="t" style="left:690px;top:956px;font-size:10px;color:#555">1/1 구역</div>
<div class="t" style="left:740px;top:956px;font-size:10px;color:#555">삽입</div>
<div class="t" style="left:772px;top:956px;font-size:10px;color:#2a5aa0">변경 내용 [기록 중지]</div>
<div class="t" style="left:1381px;top:956px;font-size:10px;color:#666">185%</div>
<div class="a" style="left:511px;top:953px;width:1px;height:16px;background:#e2e2e2"></div>
<div class="a" style="left:575px;top:953px;width:1px;height:16px;background:#e2e2e2"></div>
<div class="a" style="left:630px;top:953px;width:1px;height:16px;background:#e2e2e2"></div>
<div class="a" style="left:681px;top:953px;width:1px;height:16px;background:#e2e2e2"></div>
<div class="a" style="left:731px;top:953px;width:1px;height:16px;background:#e2e2e2"></div>
<div class="a" style="left:763px;top:953px;width:1px;height:16px;background:#e2e2e2"></div>
<div class="a" style="left:860px;top:953px;width:1px;height:16px;background:#e2e2e2"></div>
<svg class="a" style="left:1170px;top:952px" width="210" height="18" viewBox="0 0 210 18"><rect x="3.5" y="2.5" width="13" height="13" fill="#dce8f6" stroke="#7aa7d8"/><rect x="6.5" y="5.5" width="8" height="8" fill="none" stroke="#666"/><rect x="26.5" y="4.5" width="10" height="9" fill="none" stroke="#666"/><rect x="47.5" y="4.5" width="10" height="9" fill="none" stroke="#666"/><rect x="49.5" y="6.5" width="6" height="5" fill="#666"/><rect x="80.5" y="5.5" width="9" height="9" fill="none" stroke="#aaa"/><path d="M99 9 H153" stroke="#3a6fd0" stroke-width="1.5"/><circle cx="135" cy="9" r="3.5" fill="#fff" stroke="#555"/><rect x="174.5" y="4.5" width="10" height="10" fill="none" stroke="#888"/><circle cx="200" cy="8" r="4" fill="none" stroke="#555"/><path d="M203 11 L206 14" stroke="#555" stroke-width="1.5"/></svg>

<!-- TASKBAR -->
<div id="task" class="a"></div>
<div class="a" style="left:106px;top:971px;width:36px;height:30px;background:#34404f"></div>
<div class="a" style="left:290px;top:971px;width:36px;height:30px;background:#434e5c"></div>
<div class="a" style="left:72px;top:999px;width:30px;height:2px;background:#5fa3de"></div>
<div class="a" style="left:106px;top:999px;width:36px;height:2px;background:#5fa3de"></div>
<div class="a" style="left:146px;top:999px;width:30px;height:2px;background:#5fa3de"></div>
<div class="a" style="left:182px;top:999px;width:30px;height:2px;background:#5fa3de"></div>
<div class="a" style="left:219px;top:999px;width:30px;height:2px;background:#5fa3de"></div>
<div class="a" style="left:256px;top:999px;width:30px;height:2px;background:#5fa3de"></div>
<div class="a" style="left:290px;top:999px;width:36px;height:2px;background:#5fa3de"></div>
<div class="a" style="left:329px;top:999px;width:30px;height:2px;background:#5fa3de"></div>
<div class="a" style="left:366px;top:999px;width:30px;height:2px;background:#5fa3de"></div>
<svg class="a" style="left:0;top:971px" width="400" height="30" viewBox="0 0 400 30">
<g fill="#fff"><path d="M7 9.5 L12.5 8.7 V14.3 H7Z M13.5 8.5 L19.5 7.6 V14.3 H13.5Z M7 15.3 H12.5 V20.9 L7 20.1Z M13.5 15.3 H19.5 V22 L13.5 21.1Z"/></g>
<circle cx="51" cy="12" r="4.6" fill="none" stroke="#fff" stroke-width="1.3"/><path d="M47.5 15.5 L43 20.5" stroke="#fff" stroke-width="1.5"/>
<circle cx="87.3" cy="15" r="8.4" fill="#db4437"/><path d="M87.3 15 L80 19.2 A8.4 8.4 0 0 0 90 23 Z" fill="#0f9d58"/><path d="M87.3 15 L90 23 A8.4 8.4 0 0 0 95.7 15 H87.3Z" fill="#f4b400"/><circle cx="87.3" cy="15" r="3.9" fill="#fff"/><circle cx="87.3" cy="15" r="3" fill="#4285f4"/>
<circle cx="123.8" cy="15" r="8.5" fill="#1e78c8"/><path d="M116 12 Q118 6 124 6.5 Q131 7 132 13 Q132 16 128 16 H120 Q121 21 127 21 Q130 21 131 19.5 Q128 24 123 23.5 Q115 22 116 12Z" fill="#2fc0a8"/><path d="M120 15 Q120 11 124 11 Q128 11 128 14Z" fill="#1b5fa8"/>
<path d="M152.5 9 H159 L161 11 H169 V23 H152.5Z" fill="#e8b838"/><path d="M152.5 13 H169 V23 H152.5Z" fill="#f8d060"/><rect x="157" y="17" width="7" height="6" fill="#2a7ad0"/>
<rect x="188" y="6" width="19" height="18" fill="#f9e000"/><ellipse cx="197.5" cy="14" rx="7" ry="5" fill="#3c1e1e"/><path d="M194 18 L193 21 L197 18.5Z" fill="#3c1e1e"/><text x="192.5" y="15.5" font-size="4" fill="#f9e000" font-family="Liberation Sans" font-weight="bold">TALK</text>
<rect x="225.5" y="6.5" width="17" height="17" rx="6" fill="#2d8cff"/><rect x="229" y="11.5" width="7" height="7" rx="1.2" fill="#fff"/><path d="M236 14 L239.5 11.5 V18.5 L236 16Z" fill="#fff"/>
<rect x="267" y="7" width="12" height="16" fill="#f4f4f4" stroke="#d24726" stroke-width="1"/><path d="M262 8.5 L271 6.5 V23.5 L262 21.5Z" fill="#d24726"/><text x="263.5" y="19" font-size="9" fill="#fff" font-family="Liberation Sans" font-weight="bold">P</text><path d="M273 11 H277 M273 14 H277 M273 17 H277" stroke="#d24726"/>
<path d="M301 7 H315 L313 21 Q312.5 23 310 23 H301Z" fill="#2390d8"/><path d="M305 10 H311 M308 10 V12 M304.5 14 Q308 12 311.5 14 Q308 17 304.5 14 M303.5 19 H312.5 M308 17 V19" stroke="#fff" stroke-width="1" fill="none"/>
<circle cx="344" cy="15" r="8.8" fill="#4a88c8"/><circle cx="342" cy="12" r="5" fill="#8ab8e8" opacity=".7"/><text x="338" y="19" font-size="9" fill="#fff" font-family="Liberation Serif">Σ</text>
<rect x="372.7" y="6.5" width="16.7" height="17" rx="2" fill="#fff"/><path d="M383 23.5 L389.4 17 V23.5Z" fill="#8a3ad0"/><text x="374" y="19.5" font-size="9.5" fill="#7b2fc8" font-family="Liberation Sans" font-weight="bold">EN</text>
<path d="M294 18.5 V29 L296.5 26.5 L298.5 30 L300 29.3 L298 26 H301.5Z" fill="#fff" stroke="#000" stroke-width=".6"/>
</svg>
<svg class="a" style="left:1235px;top:971px" width="200" height="30" viewBox="0 0 200 30">
<path d="M7.5 16 L11.5 12 L15.5 16" fill="none" stroke="#fff" stroke-width="1.2"/>
<g stroke="#fff" stroke-width="1" fill="none"><rect x="27.5" y="9.5" width="9" height="8"/><path d="M24.5 9.5 V21.5 M24.5 12.5 H27.5 M29 21.5 H35 M32 17.5 V21.5"/></g>
<g stroke="#fff" stroke-width="1.1" fill="none"><path d="M42.5 13 H45 L48 10 V20 L45 17 H42.5Z"/><path d="M50 12.5 Q51.5 15 50 17.5 M52.5 11 Q55 15 52.5 19 M55 9.5 Q58.5 15 55 20.5"/></g>
<circle cx="65.5" cy="15" r="5.5" fill="#8a8f98"/><path d="M63 12.5 L68 17.5 M68 12.5 L63 17.5" stroke="#3a3f48" stroke-width="1.4"/>
<rect x="81" y="8.5" width="11" height="12" fill="#fff"/><text x="81.5" y="18.5" font-size="10" fill="#000" font-family="Liberation Sans">한</text>
<path d="M169.5 9.5 H181.5 V19.5 H177 L175 22 L173 19.5 H169.5Z" fill="none" stroke="#fff" stroke-width="1"/>
<path d="M196.5 2 V29" stroke="#6a7588"/>
</svg>
<div class="t" style="left:1346px;top:974px;font-size:10px;color:#fff">오후 7:53</div>
<div class="t" style="left:1340px;top:987px;font-size:10px;color:#fff">2020-11-18</div>
<div id="blk" class="a"></div>
<div id="bot" class="a"></div>

<!-- PANEL -->
<div id="panel" class="a"></div>
<svg class="a" style="left:1464px;top:60px" width="16" height="12" viewBox="0 0 16 12"><path d="M2.5 3 L8 8.5 L13.5 3" fill="none" stroke="#555566" stroke-width="1.8"/></svg>
<div class="t" style="left:1628px;top:55px;font-size:19px;font-weight:bold;color:#222">참가자(27)</div>
<div class="a" style="left:1449px;top:97px;width:461px;height:42px;border-radius:21px;background:#e8e8ec"></div>
<svg class="a" style="left:1462px;top:108px" width="22" height="22" viewBox="0 0 22 22"><circle cx="9" cy="9" r="6.8" fill="none" stroke="#555" stroke-width="1.6"/><line x1="14" y1="14" x2="19" y2="19" stroke="#555" stroke-width="1.8"/></svg>
<div class="t" style="left:1492px;top:108px;font-size:19px;color:#333">참가자 찾기</div>
<div class="a" style="left:1435px;top:148px;width:480px;height:786px;overflow:hidden">
<div class="row" style="top:9px"><div class="av" style="background:#2b7bba;font-size:19px">NK</div><div class="nm">Namgyu kang</div><svg class="ic" style="left:352px;top:8px" width="70" height="28" viewBox="0 0 70 28"><path d="M13 6.4 Q13 2.4 17 2.4 Q21 2.4 21 6.4 V11 Q21 15 17 15 Q13 15 13 11Z" fill="none" stroke="#e0282e" stroke-width="1.6"/><path d="M10 11.5 Q10 19 17 19 Q24 19 24 11.5 M17 19 V23.5 M13.5 23.5 H20.5" fill="none" stroke="#e0282e" stroke-width="1.6"/><line x1="5.3" y1="24.2" x2="28.4" y2="1.7" stroke="#fff" stroke-width="4.5"/><line x1="5.3" y1="24.2" x2="28.4" y2="1.7" stroke="#e0282e" stroke-width="1.7"/><rect x="41.8" y="5.8" width="16.5" height="13.2" rx="3" fill="none" stroke="#e0282e" stroke-width="1.6"/><path d="M58.3 9.5 L65 6.5 V18.5 L58.3 15.2" fill="none" stroke="#e0282e" stroke-width="1.6" stroke-linejoin="round"/><line x1="41.6" y1="24.5" x2="65" y2="1.7" stroke="#fff" stroke-width="4.5"/><line x1="41.6" y1="24.5" x2="65" y2="1.7" stroke="#e0282e" stroke-width="1.7"/></svg></div>
<div class="row" style="top:71px"><div class="av" style="background:#2b7bba;font-size:19px">경</div><div class="nm">경숙 이</div><svg class="ic" style="left:352px;top:8px" width="70" height="28" viewBox="0 0 70 28"><path d="M13 6.4 Q13 2.4 17 2.4 Q21 2.4 21 6.4 V11 Q21 15 17 15 Q13 15 13 11Z" fill="none" stroke="#e0282e" stroke-width="1.6"/><path d="M10 11.5 Q10 19 17 19 Q24 19 24 11.5 M17 19 V23.5 M13.5 23.5 H20.5" fill="none" stroke="#e0282e" stroke-width="1.6"/><line x1="5.3" y1="24.2" x2="28.4" y2="1.7" stroke="#fff" stroke-width="4.5"/><line x1="5.3" y1="24.2" x2="28.4" y2="1.7" stroke="#e0282e" stroke-width="1.7"/><rect x="41.8" y="5.8" width="16.5" height="13.2" rx="3" fill="none" stroke="#6e6e82" stroke-width="1.7"/><path d="M58.3 9.5 L65 6.5 V18.5 L58.3 15.2" fill="none" stroke="#6e6e82" stroke-width="1.7" stroke-linejoin="round"/></svg></div>
<div class="row" style="top:133px"><svg class="av" width="41" height="41" viewBox="0 0 41 41" style="background:none"><defs><clipPath id="cp"><rect width="41" height="41" rx="9"/></clipPath></defs><g clip-path="url(#cp)"><rect width="41" height="41" fill="#5a4a3a"/><rect x="0" y="0" width="41" height="15" fill="#7a8a6a"/><ellipse cx="21" cy="19" rx="13" ry="16" fill="#2a1a14"/><ellipse cx="21" cy="20" rx="8.5" ry="11" fill="#e8c0a8"/><path d="M4 41 Q8 30 21 31 Q34 30 38 41Z" fill="#a02828"/></g></svg><div class="nm">경숙 이</div><svg class="ic" style="left:352px;top:8px" width="70" height="28" viewBox="0 0 70 28"><path d="M13 6.4 Q13 2.4 17 2.4 Q21 2.4 21 6.4 V11 Q21 15 17 15 Q13 15 13 11Z" fill="none" stroke="#e0282e" stroke-width="1.6"/><path d="M10 11.5 Q10 19 17 19 Q24 19 24 11.5 M17 19 V23.5 M13.5 23.5 H20.5" fill="none" stroke="#e0282e" stroke-width="1.6"/><line x1="5.3" y1="24.2" x2="28.4" y2="1.7" stroke="#fff" stroke-width="4.5"/><line x1="5.3" y1="24.2" x2="28.4" y2="1.7" stroke="#e0282e" stroke-width="1.7"/><rect x="41.8" y="5.8" width="16.5" height="13.2" rx="3" fill="none" stroke="#e0282e" stroke-width="1.6"/><path d="M58.3 9.5 L65 6.5 V18.5 L58.3 15.2" fill="none" stroke="#e0282e" stroke-width="1.6" stroke-linejoin="round"/><line x1="41.6" y1="24.5" x2="65" y2="1.7" stroke="#fff" stroke-width="4.5"/><line x1="41.6" y1="24.5" x2="65" y2="1.7" stroke="#e0282e" stroke-width="1.7"/></svg></div>
<div class="row" style="top:195px"><div class="av" style="background:#d45113;font-size:19px">권</div><div class="nm">권이삭(임상2학기)</div><svg class="ic" style="left:352px;top:8px" width="70" height="28" viewBox="0 0 70 28"><path d="M13 6.4 Q13 2.4 17 2.4 Q21 2.4 21 6.4 V11 Q21 15 17 15 Q13 15 13 11Z" fill="none" stroke="#e0282e" stroke-width="1.6"/><path d="M10 11.5 Q10 19 17 19 Q24 19 24 11.5 M17 19 V23.5 M13.5 23.5 H20.5" fill="none" stroke="#e0282e" stroke-width="1.6"/><line x1="5.3" y1="24.2" x2="28.4" y2="1.7" stroke="#fff" stroke-width="4.5"/><line x1="5.3" y1="24.2" x2="28.4" y2="1.7" stroke="#e0282e" stroke-width="1.7"/><rect x="41.8" y="5.8" width="16.5" height="13.2" rx="3" fill="none" stroke="#e0282e" stroke-width="1.6"/><path d="M58.3 9.5 L65 6.5 V18.5 L58.3 15.2" fill="none" stroke="#e0282e" stroke-width="1.6" stroke-linejoin="round"/><line x1="41.6" y1="24.5" x2="65" y2="1.7" stroke="#fff" stroke-width="4.5"/><line x1="41.6" y1="24.5" x2="65" y2="1.7" stroke="#e0282e" stroke-width="1.7"/></svg></div>
<div class="row" style="top:257px"><div class="av" style="background:#0f62d6;font-size:19px"></div><div class="nm">김미라</div><svg class="ic" style="left:352px;top:8px" width="70" height="28" viewBox="0 0 70 28"><path d="M13 6.4 Q13 2.4 17 2.4 Q21 2.4 21 6.4 V11 Q21 15 17 15 Q13 15 13 11Z" fill="none" stroke="#e0282e" stroke-width="1.6"/><path d="M10 11.5 Q10 19 17 19 Q24 19 24 11.5 M17 19 V23.5 M13.5 23.5 H20.5" fill="none" stroke="#e0282e" stroke-width="1.6"/><line x1="5.3" y1="24.2" x2="28.4" y2="1.7" stroke="#fff" stroke-width="4.5"/><line x1="5.3" y1="24.2" x2="28.4" y2="1.7" stroke="#e0282e" stroke-width="1.7"/><rect x="41.8" y="5.8" width="16.5" height="13.2" rx="3" fill="none" stroke="#6e6e82" stroke-width="1.7"/><path d="M58.3 9.5 L65 6.5 V18.5 L58.3 15.2" fill="none" stroke="#6e6e82" stroke-width="1.7" stroke-linejoin="round"/></svg></div>
<div class="row" style="top:319px"><div class="av" style="background:#17a085;font-size:19px">김</div><div class="nm">김원룡</div><svg class="ic" style="left:352px;top:8px" width="70" height="28" viewBox="0 0 70 28"><path d="M13 6.4 Q13 2.4 17 2.4 Q21 2.4 21 6.4 V11 Q21 15 17 15 Q13 15 13 11Z" fill="none" stroke="#e0282e" stroke-width="1.6"/><path d="M10 11.5 Q10 19 17 19 Q24 19 24 11.5 M17 19 V23.5 M13.5 23.5 H20.5" fill="none" stroke="#e0282e" stroke-width="1.6"/><line x1="5.3" y1="24.2" x2="28.4" y2="1.7" stroke="#fff" stroke-width="4.5"/><line x1="5.3" y1="24.2" x2="28.4" y2="1.7" stroke="#e0282e" stroke-width="1.7"/><rect x="41.8" y="5.8" width="16.5" height="13.2" rx="3" fill="none" stroke="#e0282e" stroke-width="1.6"/><path d="M58.3 9.5 L65 6.5 V18.5 L58.3 15.2" fill="none" stroke="#e0282e" stroke-width="1.6" stroke-linejoin="round"/><line x1="41.6" y1="24.5" x2="65" y2="1.7" stroke="#fff" stroke-width="4.5"/><line x1="41.6" y1="24.5" x2="65" y2="1.7" stroke="#e0282e" stroke-width="1.7"/></svg></div>
<div class="row" style="top:381px"><div class="av" style="background:#25ae5f;font-size:19px">김</div><div class="nm">김진실</div><svg class="ic" style="left:352px;top:8px" width="70" height="28" viewBox="0 0 70 28"><path d="M13 6.4 Q13 2.4 17 2.4 Q21 2.4 21 6.4 V11 Q21 15 17 15 Q13 15 13 11Z" fill="none" stroke="#e0282e" stroke-width="1.6"/><path d="M10 11.5 Q10 19 17 19 Q24 19 24 11.5 M17 19 V23.5 M13.5 23.5 H20.5" fill="none" stroke="#e0282e" stroke-width="1.6"/><line x1="5.3" y1="24.2" x2="28.4" y2="1.7" stroke="#fff" stroke-width="4.5"/><line x1="5.3" y1="24.2" x2="28.4" y2="1.7" stroke="#e0282e" stroke-width="1.7"/><rect x="41.8" y="5.8" width="16.5" height="13.2" rx="3" fill="none" stroke="#e0282e" stroke-width="1.6"/><path d="M58.3 9.5 L65 6.5 V18.5 L58.3 15.2" fill="none" stroke="#e0282e" stroke-width="1.6" stroke-linejoin="round"/><line x1="41.6" y1="24.5" x2="65" y2="1.7" stroke="#fff" stroke-width="4.5"/><line x1="41.6" y1="24.5" x2="65" y2="1.7" stroke="#e0282e" stroke-width="1.7"/></svg></div>
<div class="row" style="top:443px"><div class="av" style="background:#3b4c58;font-size:15px">채영</div><div class="nm">김채영</div><svg class="ic" style="left:352px;top:8px" width="70" height="28" viewBox="0 0 70 28"><path d="M13 6.4 Q13 2.4 17 2.4 Q21 2.4 21 6.4 V11 Q21 15 17 15 Q13 15 13 11Z" fill="none" stroke="#e0282e" stroke-width="1.6"/><path d="M10 11.5 Q10 19 17 19 Q24 19 24 11.5 M17 19 V23.5 M13.5 23.5 H20.5" fill="none" stroke="#e0282e" stroke-width="1.6"/><line x1="5.3" y1="24.2" x2="28.4" y2="1.7" stroke="#fff" stroke-width="4.5"/><line x1="5.3" y1="24.2" x2="28.4" y2="1.7" stroke="#e0282e" stroke-width="1.7"/><rect x="41.8" y="5.8" width="16.5" height="13.2" rx="3" fill="none" stroke="#e0282e" stroke-width="1.6"/><path d="M58.3 9.5 L65 6.5 V18.5 L58.3 15.2" fill="none" stroke="#e0282e" stroke-width="1.6" stroke-linejoin="round"/><line x1="41.6" y1="24.5" x2="65" y2="1.7" stroke="#fff" stroke-width="4.5"/><line x1="41.6" y1="24.5" x2="65" y2="1.7" stroke="#e0282e" stroke-width="1.7"/></svg></div>
<div class="row" style="top:505px"><div class="av" style="background:#f39c11;font-size:19px">노</div><div class="nm">노승현</div><svg class="ic" style="left:352px;top:8px" width="70" height="28" viewBox="0 0 70 28"><path d="M13 6.4 Q13 2.4 17 2.4 Q21 2.4 21 6.4 V11 Q21 15 17 15 Q13 15 13 11Z" fill="none" stroke="#e0282e" stroke-width="1.6"/><path d="M10 11.5 Q10 19 17 19 Q24 19 24 11.5 M17 19 V23.5 M13.5 23.5 H20.5" fill="none" stroke="#e0282e" stroke-width="1.6"/><line x1="5.3" y1="24.2" x2="28.4" y2="1.7" stroke="#fff" stroke-width="4.5"/><line x1="5.3" y1="24.2" x2="28.4" y2="1.7" stroke="#e0282e" stroke-width="1.7"/><rect x="41.8" y="5.8" width="16.5" height="13.2" rx="3" fill="none" stroke="#e0282e" stroke-width="1.6"/><path d="M58.3 9.5 L65 6.5 V18.5 L58.3 15.2" fill="none" stroke="#e0282e" stroke-width="1.6" stroke-linejoin="round"/><line x1="41.6" y1="24.5" x2="65" y2="1.7" stroke="#fff" stroke-width="4.5"/><line x1="41.6" y1="24.5" x2="65" y2="1.7" stroke="#e0282e" stroke-width="1.7"/></svg></div>
<div class="row" style="top:567px"><div class="av" style="background:#25ae5f;font-size:19px">로</div><div class="nm">로즈 핀리</div><svg class="ic" style="left:352px;top:8px" width="70" height="28" viewBox="0 0 70 28"><path d="M13 6.4 Q13 2.4 17 2.4 Q21 2.4 21 6.4 V11 Q21 15 17 15 Q13 15 13 11Z" fill="none" stroke="#e0282e" stroke-width="1.6"/><path d="M10 11.5 Q10 19 17 19 Q24 19 24 11.5 M17 19 V23.5 M13.5 23.5 H20.5" fill="none" stroke="#e0282e" stroke-width="1.6"/><line x1="5.3" y1="24.2" x2="28.4" y2="1.7" stroke="#fff" stroke-width="4.5"/><line x1="5.3" y1="24.2" x2="28.4" y2="1.7" stroke="#e0282e" stroke-width="1.7"/><rect x="41.8" y="5.8" width="16.5" height="13.2" rx="3" fill="none" stroke="#6e6e82" stroke-width="1.7"/><path d="M58.3 9.5 L65 6.5 V18.5 L58.3 15.2" fill="none" stroke="#6e6e82" stroke-width="1.7" stroke-linejoin="round"/></svg></div>
<div class="row" style="top:629px"><div class="av" style="background:#2b7bba;font-size:19px">박</div><div class="nm">박유정</div><svg class="ic" style="left:352px;top:8px" width="70" height="28" viewBox="0 0 70 28"><path d="M13 6.4 Q13 2.4 17 2.4 Q21 2.4 21 6.4 V11 Q21 15 17 15 Q13 15 13 11Z" fill="none" stroke="#e0282e" stroke-width="1.6"/><path d="M10 11.5 Q10 19 17 19 Q24 19 24 11.5 M17 19 V23.5 M13.5 23.5 H20.5" fill="none" stroke="#e0282e" stroke-width="1.6"/><line x1="5.3" y1="24.2" x2="28.4" y2="1.7" stroke="#fff" stroke-width="4.5"/><line x1="5.3" y1="24.2" x2="28.4" y2="1.7" stroke="#e0282e" stroke-width="1.7"/><rect x="41.8" y="5.8" width="16.5" height="13.2" rx="3" fill="none" stroke="#6e6e82" stroke-width="1.7"/><path d="M58.3 9.5 L65 6.5 V18.5 L58.3 15.2" fill="none" stroke="#6e6e82" stroke-width="1.7" stroke-linejoin="round"/></svg></div>
<div class="row" style="top:691px"><div class="av" style="background:#2b7bba;font-size:19px">서</div><div class="nm">서지형(2499)</div><svg class="ic" style="left:352px;top:8px" width="70" height="28" viewBox="0 0 70 28"><path d="M13 6.4 Q13 2.4 17 2.4 Q21 2.4 21 6.4 V11 Q21 15 17 15 Q13 15 13 11Z" fill="none" stroke="#e0282e" stroke-width="1.6"/><path d="M10 11.5 Q10 19 17 19 Q24 19 24 11.5 M17 19 V23.5 M13.5 23.5 H20.5" fill="none" stroke="#e0282e" stroke-width="1.6"/><line x1="5.3" y1="24.2" x2="28.4" y2="1.7" stroke="#fff" stroke-width="4.5"/><line x1="5.3" y1="24.2" x2="28.4" y2="1.7" stroke="#e0282e" stroke-width="1.7"/><rect x="41.8" y="5.8" width="16.5" height="13.2" rx="3" fill="none" stroke="#e0282e" stroke-width="1.6"/><path d="M58.3 9.5 L65 6.5 V18.5 L58.3 15.2" fill="none" stroke="#e0282e" stroke-width="1.6" stroke-linejoin="round"/><line x1="41.6" y1="24.5" x2="65" y2="1.7" stroke="#fff" stroke-width="4.5"/><line x1="41.6" y1="24.5" x2="65" y2="1.7" stroke="#e0282e" stroke-width="1.7"/></svg></div>
<div class="row" style="top:753px"><div class="av" style="background:#f39c11;font-size:19px">소</div><div class="nm">소영</div><svg class="ic" style="left:352px;top:8px" width="70" height="28" viewBox="0 0 70 28"><path d="M13 6.4 Q13 2.4 17 2.4 Q21 2.4 21 6.4 V11 Q21 15 17 15 Q13 15 13 11Z" fill="none" stroke="#e0282e" stroke-width="1.6"/><path d="M10 11.5 Q10 19 17 19 Q24 19 24 11.5 M17 19 V23.5 M13.5 23.5 H20.5" fill="none" stroke="#e0282e" stroke-width="1.6"/><line x1="5.3" y1="24.2" x2="28.4" y2="1.7" stroke="#fff" stroke-width="4.5"/><line x1="5.3" y1="24.2" x2="28.4" y2="1.7" stroke="#e0282e" stroke-width="1.7"/><rect x="41.8" y="5.8" width="16.5" height="13.2" rx="3" fill="none" stroke="#e0282e" stroke-width="1.6"/><path d="M58.3 9.5 L65 6.5 V18.5 L58.3 15.2" fill="none" stroke="#e0282e" stroke-width="1.6" stroke-linejoin="round"/><line x1="41.6" y1="24.5" x2="65" y2="1.7" stroke="#fff" stroke-width="4.5"/><line x1="41.6" y1="24.5" x2="65" y2="1.7" stroke="#e0282e" stroke-width="1.7"/></svg></div>
<div class="a" style="left:466px;top:0;width:12px;height:786px;border-radius:6px;background:#f2f2f5"></div>
<div class="a" style="left:466px;top:87px;width:12px;height:350px;border-radius:6px;background:#a9a9b1"></div>
</div>
<div class="btn" style="left:1483px;top:961px;width:59px">초대</div>
<div class="btn" style="left:1588px;top:961px;width:159px">나만 음소거 해제</div>
<div class="btn" style="left:1793px;top:961px;width:76px">손들기</div>

</body></html>
